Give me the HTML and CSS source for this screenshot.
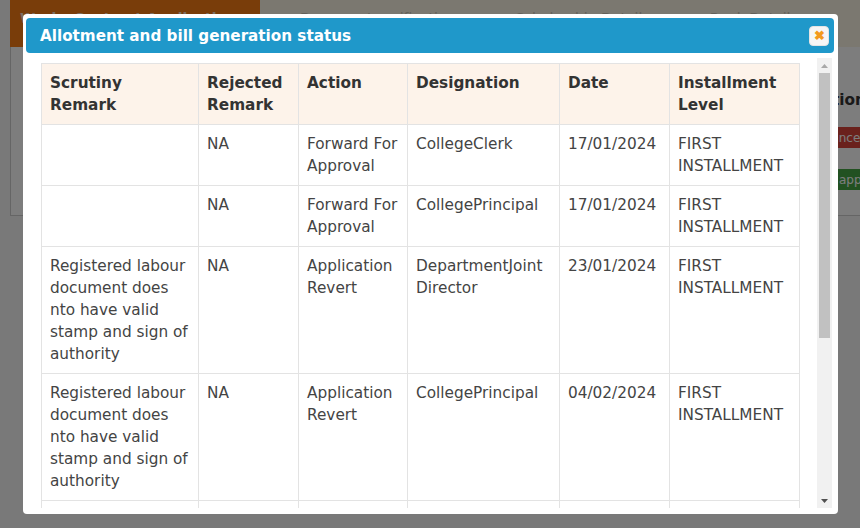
FILE: index.html
```html
<!DOCTYPE html>
<html lang="en">
<head>
  <meta charset="UTF-8">
  <meta name="viewport" content="width=device-width, initial-scale=1.0">
  <title>Allotment and bill generation status</title>
  <link rel="stylesheet" href="styles.css">
</head>
<body>
  <div class="page">
    <header class="topbar">
      <div class="topbar__tab">Works Contract Application</div>
      <div class="topbar__rest">
        <span>Document verification</span>
        <span>Scholarship Details</span>
        <span>Bank Details</span>
      </div>
    </header>
    <section class="panel">
      <div class="panel__side">
        <p class="panel__label">Action</p>
        <button class="btn btn--red">Cancel</button>
        <button class="btn btn--green">approve</button>
      </div>
    </section>
  </div>

  <div class="overlay">
    <div class="dialog">
      <div class="dialog__title">
        <span>Allotment and bill generation status</span>
        <button class="dialog__close" aria-label="Close">&#x2716;</button>
      </div>
      <div class="dialog__main">
        <div class="dialog__body">
          <table class="status-table">
            <colgroup>
              <col style="width:157px">
              <col style="width:100px">
              <col style="width:109px">
              <col style="width:152px">
              <col style="width:110px">
              <col style="width:130px">
            </colgroup>
            <thead>
              <tr>
                <th>Scrutiny Remark</th>
                <th>Rejected Remark</th>
                <th>Action</th>
                <th>Designation</th>
                <th>Date</th>
                <th>Installment Level</th>
              </tr>
            </thead>
            <tbody>
              <tr>
                <td></td>
                <td>NA</td>
                <td>Forward For Approval</td>
                <td>CollegeClerk</td>
                <td>17/01/2024</td>
                <td>FIRST INSTALLMENT</td>
              </tr>
              <tr>
                <td></td>
                <td>NA</td>
                <td>Forward For Approval</td>
                <td>CollegePrincipal</td>
                <td>17/01/2024</td>
                <td>FIRST INSTALLMENT</td>
              </tr>
              <tr>
                <td>Registered labour document does nto have valid stamp and sign of authority</td>
                <td>NA</td>
                <td>Application Revert</td>
                <td>DepartmentJoint Director</td>
                <td>23/01/2024</td>
                <td>FIRST INSTALLMENT</td>
              </tr>
              <tr>
                <td>Registered labour document does nto have valid stamp and sign of authority</td>
                <td>NA</td>
                <td>Application Revert</td>
                <td>CollegePrincipal</td>
                <td>04/02/2024</td>
                <td>FIRST INSTALLMENT</td>
              </tr>
              <tr>
                <td>Registered labour document does nto have valid stamp and sign of authority</td>
                <td>NA</td>
                <td>Application Revert</td>
                <td>CollegeClerk</td>
                <td>06/02/2024</td>
                <td>FIRST INSTALLMENT</td>
              </tr>
              <tr>
                <td></td>
                <td>NA</td>
                <td>Forward For Approval</td>
                <td>CollegeClerk</td>
                <td>08/02/2024</td>
                <td>FIRST INSTALLMENT</td>
              </tr>
            </tbody>
          </table>
        </div>
        <div class="scrollbar">
          <span class="scrollbar__btn">
            <svg width="7" height="4" viewBox="0 0 7 4"><polygon points="0,4 3.5,0 7,4" fill="#a8a8a8"/></svg>
          </span>
          <span class="scrollbar__thumb"></span>
          <span class="scrollbar__btn">
            <svg width="7" height="4" viewBox="0 0 7 4"><polygon points="0,0 7,0 3.5,4" fill="#505050"/></svg>
          </span>
        </div>
      </div>
    </div>
  </div>
</body>
</html>
```

FILE: styles.css
```css
body {
  margin: 0;
  padding: 0;
  background: #f7f7f7;
  font-family: "DejaVu Sans", Verdana, sans-serif;
  font-size: 15.3px;
  color: #333;
  overflow: hidden;
}

/* page behind the modal, cut off at the window edge */
.page {
  height: 528px;
  padding-left: 10px;
  overflow: hidden;
}

.topbar {
  display: flex;
  width: 910px;
  height: 47px;
}

.topbar__tab {
  width: 250px;
  background: #f77c16;
  color: #fde3cc;
  font-weight: bold;
  font-size: 14px;
  padding: 10px 10px;
  box-sizing: border-box;
}

.topbar__rest {
  flex: 1;
  display: flex;
  gap: 60px;
  padding: 10px 40px;
  font-size: 14px;
  background: #fbf5e4;
  color: #c9c4b6;
}

.panel {
  width: 910px;
  height: 168px;
  background: #fff;
  border-left: 1px solid #cfcfcf;
  border-bottom: 1px solid #cfcfcf;
  display: flex;
}

.panel__side {
  margin-left: 800px;
  display: flex;
  flex-direction: column;
  align-items: flex-start;
  padding-top: 44px;
}

.panel__label {
  margin: 0 0 18px;
  font-weight: bold;
}

.btn {
  border: none;
  color: #fff;
  font-size: 12px;
  padding: 3px 6px;
  height: 21px;
  margin-bottom: 21px;
  margin-left: 26px;
  font-family: inherit;
  text-align: left;
}

.btn--red {
  background: #d9453a;
  padding-left: 0;
  text-indent: -14px;
  width: 80px;
}

.btn--green {
  background: #46a544;
  width: 80px;
  padding-left: 2px;
}

/* modal */
.overlay {
  position: fixed;
  top: 0;
  left: 0;
  width: 100%;
  height: 100%;
  background: rgba(0, 0, 0, 0.51);
}

.dialog {
  position: absolute;
  left: 23px;
  top: 14px;
  width: 815px;
  height: 500px;
  box-sizing: border-box;
  padding: 4px 4px 6px 3px;
  background: #fff;
  border-radius: 4px;
  display: flex;
  flex-direction: column;
}

.dialog__title {
  height: 35px;
  flex: none;
  display: flex;
  align-items: center;
  justify-content: space-between;
  padding: 0 5px 0 14px;
  background: #1f98ca;
  border-radius: 4px;
  color: #fff;
  font-weight: bold;
  font-size: 15.2px;
}

.dialog__close {
  width: 20px;
  height: 20px;
  padding: 0;
  border: 1px solid #e4e4e4;
  border-radius: 4px;
  background: #f6f6f6;
  color: #f39a1d;
  font-size: 13px;
  line-height: 18px;
  font-weight: bold;
}

.dialog__main {
  flex: 1;
  min-height: 0;
  display: flex;
  margin-top: 5px;
}

.dialog__body {
  flex: 1;
  overflow: hidden;
  padding: 5px 18px 0 15px;
}

/* classic scrollbar column */
.scrollbar {
  width: 15px;
  margin-right: 2px;
  display: flex;
  flex-direction: column;
  background: #f1f1f1;
}

.scrollbar__btn {
  height: 15px;
  display: flex;
  align-items: center;
  justify-content: center;
}

.scrollbar__thumb {
  height: 265px;
  margin: 0 2px;
  background: #c1c1c1;
}

.scrollbar__thumb + .scrollbar__btn {
  margin-top: auto;
}

.status-table {
  table-layout: fixed;
  width: 758px;
  border-collapse: collapse;
  line-height: 22px;
}

.status-table th,
.status-table td {
  border: 1px solid #e3e3e3;
  padding: 8px 8px;
  text-align: left;
  vertical-align: top;
  color: #444;
}

.status-table th {
  background: #fdf3ea;
  font-weight: bold;
  color: #333;
}
```
